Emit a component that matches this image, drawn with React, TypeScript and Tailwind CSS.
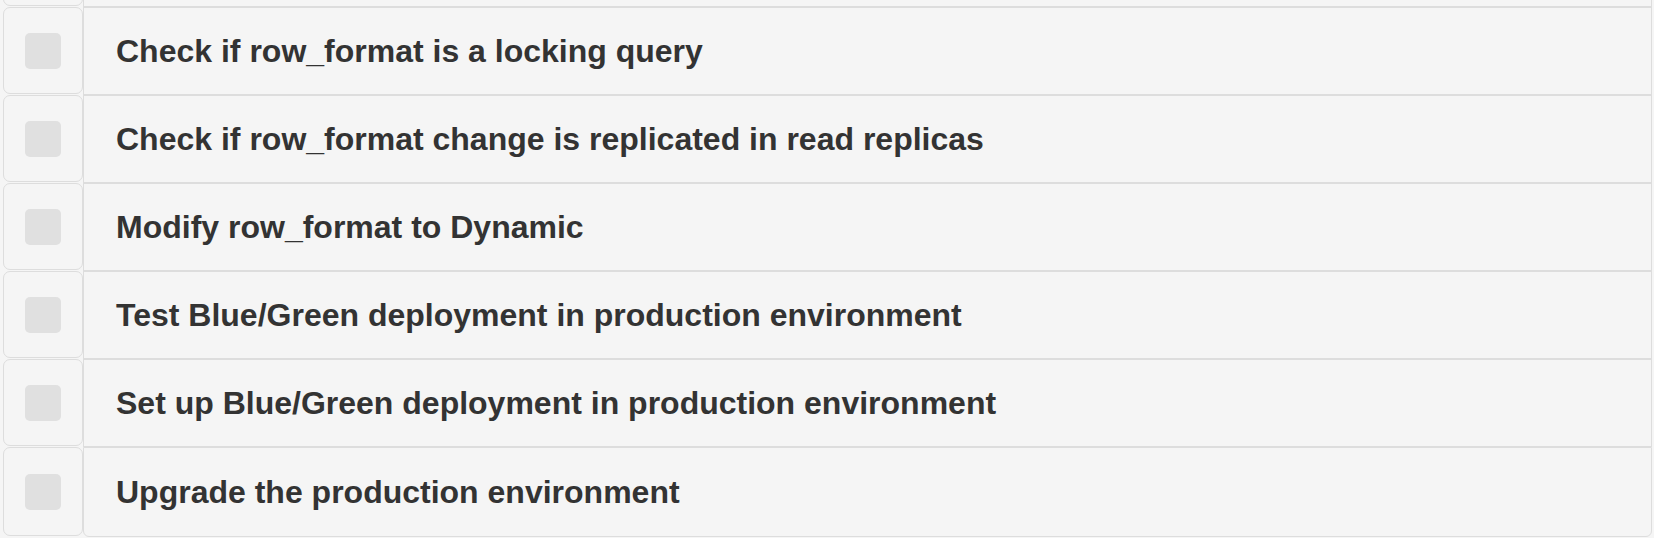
import React from "react";

const items = [
  "",
  "Check if row_format is a locking query",
  "Check if row_format change is replicated in read replicas",
  "Modify row_format to Dynamic",
  "Test Blue/Green deployment in production environment",
  "Set up Blue/Green deployment in production environment",
  "Upgrade the production environment",
];

export default function App() {
  return (
    <div
      className="h-[538px] w-[1654px] overflow-hidden bg-[#f5f5f5]"
      style={{ fontFamily: "'Liberation Sans', Arial, Helvetica, sans-serif" }}
    >
      <div className="-mt-[81px] flex flex-col">
        {items.map((t, i) => {
          const last = i === items.length - 1;
          return (
            <div key={i} className={"flex " + (last ? "h-[90px]" : "h-[88px]")}>
              <div className="w-[83px] shrink-0 pl-[3px] pb-[1px]">
                <div className="flex h-full items-center justify-center rounded-[7px] border border-[#dddddd] bg-[#f5f5f5]">
                  <div className="h-[36px] w-[36px] rounded-[5px] bg-[#e0e0e0]" />
                </div>
              </div>
              <div
                className={
                  "mr-[2px] flex flex-1 items-center border border-[#dddddd] bg-[#f5f5f5] pl-[32px] text-[32px] font-bold text-[#333333] " +
                  (last ? "rounded-b-[6px]" : "")
                }
              >
                {t}
              </div>
            </div>
          );
        })}
      </div>
    </div>
  );
}
